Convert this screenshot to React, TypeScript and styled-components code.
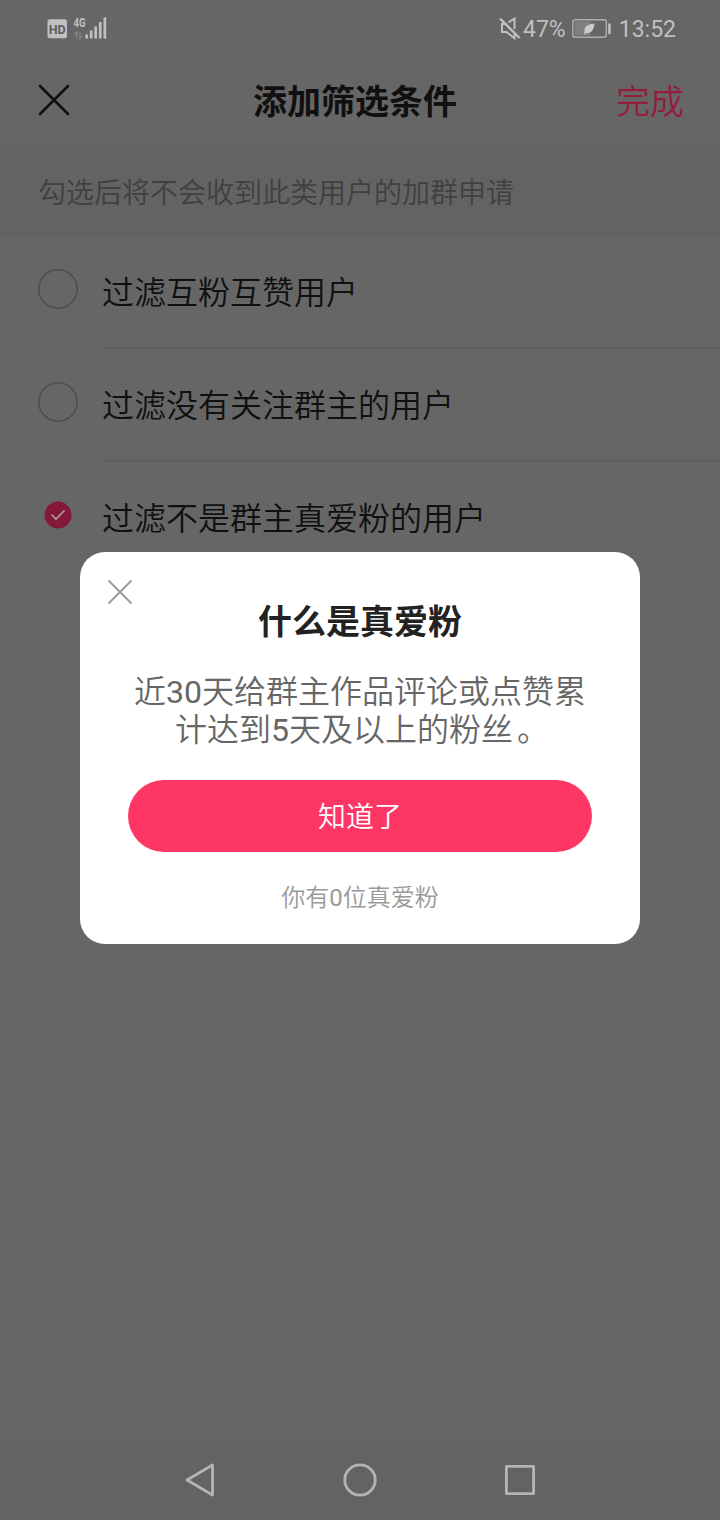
import React from 'react';
import styled, { createGlobalStyle } from 'styled-components';

const GlobalStyle = createGlobalStyle`
  * { box-sizing: border-box; }
  body {
    margin: 0;
    background: #666666;
    font-family: Roboto, "Noto Sans CJK SC", sans-serif;
  }
`;

const Screen = styled.div`
  position: relative;
  display: flex;
  flex-direction: column;
  width: 720px;
  height: 1520px;
  overflow: hidden;
  background: #666666;
  color: #101010;
`;

const StatusBar = styled.div`
  display: flex;
  justify-content: space-between;
  align-items: center;
  height: 56px;
  padding: 0 44px 0 46px;
  color: #c0c0c0;
`;

const StatusGroup = styled.div`
  display: flex;
  align-items: center;
  height: 56px;
`;

const StatusText = styled.span<{ $gap?: number }>`
  margin-left: ${({ $gap = 0 }) => $gap}px;
  padding-top: 3px;
  font-size: 23px;
  line-height: 28px;
`;

const BatteryIcon = styled.svg`
  margin-left: 6px;
`;

const Header = styled.header`
  display: grid;
  grid-template-columns: 140px 1fr 140px;
  align-items: center;
  height: 88px;
  padding: 0 36px 0 37px;
`;

const PageTitle = styled.h1`
  margin: 0;
  padding-top: 4px;
  font-size: 34px;
  font-weight: 700;
  line-height: 50px;
  text-align: center;
  padding-right: 11px;
`;

const PlainButton = styled.button`
  display: block;
  padding: 0;
  border: 0;
  background: none;
  font-family: inherit;
  color: inherit;
`;

const PageClose = styled(PlainButton)`
  justify-self: start;

  svg { display: block; }
`;

const DoneButton = styled(PlainButton)`
  justify-self: end;
  padding-top: 4px;
  font-size: 34px;
  font-weight: 350;
  line-height: 50px;
  color: #941d3b;
`;

const Hint = styled.p`
  height: 92px;
  margin: 0;
  padding: 2px 38px 0;
  border-top: 2px solid #616161;
  background: #636363;
  color: #404040;
  font-size: 28px;
  font-weight: 350;
  line-height: 91px;
`;

const FilterList = styled.div`
  display: flex;
  flex-direction: column;
  flex: 1;
`;

const FilterRow = styled.label`
  display: flex;
  height: 113px;
  padding-left: 37px;
`;

const Mark = styled.svg`
  flex: none;
  margin: 32px 23px 0 0;
`;

const FilterName = styled.span<{ $last?: boolean }>`
  flex: 1;
  padding-top: 2px;
  border-bottom: 2px solid ${({ $last }) => ($last ? 'transparent' : '#606060')};
  font-size: 32px;
  font-weight: 350;
  line-height: 110px;
`;

const NavBar = styled.nav`
  display: flex;
  justify-content: center;
  align-items: center;
  gap: 120px;
  height: 80px;
  background: #636363;
`;

const Overlay = styled.div`
  position: absolute;
  inset: 0;
  display: flex;
  justify-content: center;
  align-items: flex-start;
  padding-top: 552px;
`;

const Dialog = styled.section`
  display: flex;
  flex-direction: column;
  width: 560px;
  height: 392px;
  padding: 26px 48px 0;
  border-radius: 25px;
  background: #ffffff;
`;

const DialogClose = styled(PlainButton)`
  align-self: flex-start;
  width: 28px;
  height: 28px;
  margin-left: -22px;
`;

const DialogTitle = styled.h2`
  margin: -9px 0 0;
  font-size: 34px;
  font-weight: 700;
  line-height: 50px;
  text-align: center;
  color: #222222;
`;

const DialogText = styled.p`
  margin: 26px 0 0;
  font-size: 32px;
  font-weight: 350;
  line-height: 38px;
  text-align: center;
  color: #666666;
`;

const Digits = styled.span`
  font-weight: 400;
`;

const FullStop = styled.span`
  margin: 0 -4px 0 4px;
`;

const ConfirmButton = styled(PlainButton)`
  height: 72px;
  margin-top: 31px;
  padding-top: 4px;
  border-radius: 36px;
  background: #fe3666;
  color: #ffffff;
  font-size: 28px;
  font-weight: 350;
  line-height: 68px;
`;

const DialogNote = styled.p`
  margin: 28px 0 0;
  font-size: 24px;
  font-weight: 350;
  line-height: 37px;
  text-align: center;
  color: #999999;
`;

const filters = [
  { name: '过滤互粉互赞用户', checked: false },
  { name: '过滤没有关注群主的用户', checked: false },
  { name: '过滤不是群主真爱粉的用户', checked: true },
];

function SelectMark({ checked }: { checked: boolean }) {
  return (
    <Mark width="42" height="42" viewBox="0 0 42 42" fill="none">
      {checked ? (
        <>
          <circle cx="21" cy="21" r="13.5" fill="#85193a" />
          <path d="M14.5 20.5l4.5 4.5 8.5-8.5" stroke="#aaa0a3" strokeWidth="1.6" />
        </>
      ) : (
        <circle cx="21" cy="21" r="19.2" stroke="#4d4d4d" strokeWidth="1.5" />
      )}
    </Mark>
  );
}

function SignalIcons() {
  return (
    <svg width="64" height="28" viewBox="46 14 64 28" fill="#c0c0c0">
      <rect x="47.5" y="19.3" width="19.5" height="19" rx="2.5" />
      <text x="57.2" y="33.5" fontSize="13" fontWeight="700" textAnchor="middle" fill="#5c5c5c" textLength="17" lengthAdjust="spacingAndGlyphs">HD</text>
      <text x="73.5" y="27" fontSize="13" fontWeight="700" textLength="12" lengthAdjust="spacingAndGlyphs">4G</text>
      <path d="M77 38.5v-6.5l-2.5 2.5M80 32v6.5l2.500-2.5" stroke="#858585" strokeWidth="1.4" fill="none" />
      <path d="M85.3 34.5h2.700v4h-2.700zM89.8 30.5h2.700v8h-2.700zM94.3 26.5h2.700v12h-2.700zM98.9 22h2.700v16.5h-2.700zM103.5 17.5h2.700v21h-2.700z" />
    </svg>
  );
}

function MuteIcon() {
  return (
    <svg width="24" height="28" viewBox="499 14 24 28" fill="none" stroke="#c0c0c0" strokeWidth="2">
      <path d="M507 24h-5v8h4.500l8 6.200v-4M508.500 22.300l6-3.800v10.500" />
      <path d="M500 18.500l19.500 19.500" strokeWidth="2.300" />
    </svg>
  );
}

function Battery() {
  return (
    <BatteryIcon width="40" height="24" viewBox="572 16 40 24" fill="none">
      <rect x="572.8" y="19.8" width="33.5" height="17.5" rx="2.5" stroke="#adadad" strokeWidth="1.4" />
      <path d="M574.5 21.5h16v14h-16z" fill="#808080" />
      <path d="M608.2 23.5h2.500v10.500h-2.500z" fill="#c0c0c0" />
      <path d="M594.5 23.5c-6.500.5-10.500 3-10 8l-.5 3.200 2-1.500c5.500.5 8-3.700 8.500-9.700z" fill="#cccccc" />
    </BatteryIcon>
  );
}

export default function App() {
  return (
    <>
      <GlobalStyle />
      <Screen>
        <StatusBar>
          <StatusGroup>
            <SignalIcons />
          </StatusGroup>
          <StatusGroup>
            <MuteIcon />
            <StatusText>47%</StatusText>
            <Battery />
            <StatusText $gap={7}>13:52</StatusText>
          </StatusGroup>
        </StatusBar>
        <Header>
          <PageClose aria-label="关闭">
            <svg width="34" height="34" viewBox="0 0 34 34" stroke="#101010" strokeWidth="2.5" strokeLinecap="round">
              <path d="M3 3l28 28M31 3L3 31" />
            </svg>
          </PageClose>
          <PageTitle>添加筛选条件</PageTitle>
          <DoneButton>完成</DoneButton>
        </Header>
        <Hint>勾选后将不会收到此类用户的加群申请</Hint>
        <FilterList>
          {filters.map((f, i) => (
            <FilterRow key={f.name}>
              <SelectMark checked={f.checked} />
              <FilterName $last={i === filters.length - 1}>{f.name}</FilterName>
            </FilterRow>
          ))}
        </FilterList>
        <NavBar>
          <svg width="40" height="40" viewBox="0 0 40 40" fill="none" stroke="#b4b4b4" strokeWidth="2.8" strokeLinejoin="round">
            <path d="M32.5 5v30L7 20z" />
          </svg>
          <svg width="40" height="40" viewBox="0 0 40 40" fill="none" stroke="#b4b4b4" strokeWidth="2.8">
            <circle cx="20" cy="20" r="15.2" />
          </svg>
          <svg width="40" height="40" viewBox="0 0 40 40" fill="none" stroke="#b4b4b4" strokeWidth="2.8" strokeLinejoin="round">
            <rect x="6.4" y="6.4" width="27.2" height="27.2" />
          </svg>
        </NavBar>
        <Overlay>
          <Dialog role="dialog">
            <DialogClose aria-label="关闭">
              <svg width="28" height="28" viewBox="0 0 28 28" stroke="#999999" strokeWidth="1.8" display="block">
                <path d="M2.5 2.5l23 23M25.5 2.5l-23 23" />
              </svg>
            </DialogClose>
            <DialogTitle>什么是真爱粉</DialogTitle>
            <DialogText>
              近<Digits>30</Digits>天给群主作品评论或点赞累
              <br />
              计达到<Digits>5</Digits>天及以上的粉丝<FullStop>。</FullStop>
            </DialogText>
            <ConfirmButton>知道了</ConfirmButton>
            <DialogNote>
              你有<Digits>0</Digits>位真爱粉
            </DialogNote>
          </Dialog>
        </Overlay>
      </Screen>
    </>
  );
}
